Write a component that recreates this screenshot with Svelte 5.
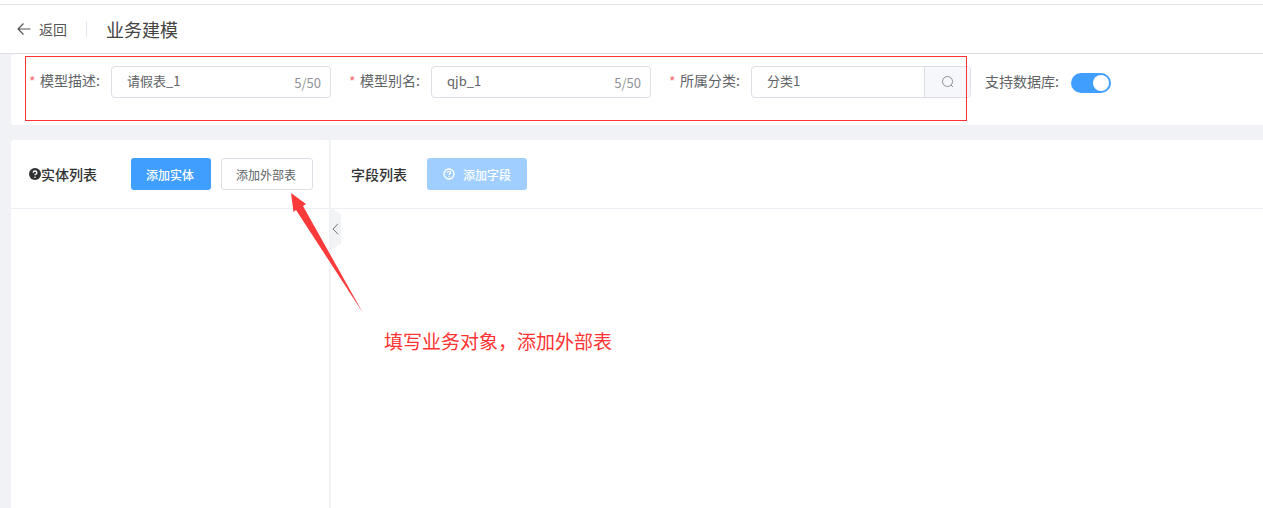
<script>
  const fields = [
    { label: '模型描述:', value: '请假表_1', count: '5/50' },
    { label: '模型别名:', value: 'qjb_1', count: '5/50' }
  ];
</script>

<div class="page">
  <header class="topbar">
    <button class="back">
      <svg width="14" height="14" viewBox="0 0 14 14" fill="none" stroke="#555" stroke-width="1.2"><path d="M13.500 7H1M6.500 1.500 1 7l5.500 5.500" /></svg>
      <span>返回</span>
    </button>
    <i class="sep"></i>
    <h1>业务建模</h1>
  </header>

  <section class="form">
    {#each fields as f}
      <div class="field">
        <span class="star">*</span>
        <span class="label">{f.label}</span>
        <div class="input">
          <span class="val">{f.value}</span>
          <span class="count">{f.count}</span>
        </div>
      </div>
    {/each}
    <div class="field">
      <span class="star">*</span>
      <span class="label">所属分类:</span>
      <div class="input group">
        <span class="val">分类1</span>
        <span class="append">
          <svg width="14" height="14" viewBox="0 0 14 14" fill="none" stroke="#8a8f99" stroke-width="1"><circle cx="6.500" cy="6.500" r="5" /><path d="m10 10 2 2" /></svg>
        </span>
      </div>
    </div>
    <div class="switch-field">
      <span class="label">支持数据库:</span>
      <span class="switch"><i></i></span>
    </div>
  </section>

  <main class="panels">
    <aside class="left">
      <div class="panel-head left-head">
        <div class="title">
          <svg width="12" height="12" viewBox="0 0 12 12"><circle cx="6" cy="6" r="6" fill="#303133" /><path d="M4.200 4.700c0-2.300 3.700-2.300 3.700 0 0 1.400-1.900 1.400-1.900 2.600" fill="none" stroke="#fff" stroke-width="1.300" /><circle cx="6" cy="9.200" r=".8" fill="#fff" /></svg>
          <span>实体列表</span>
        </div>
        <button class="btn primary">添加实体</button>
        <button class="btn plain">添加外部表</button>
      </div>
      <div class="collapse">
        <svg width="7" height="12" viewBox="0 0 7 12" fill="none" stroke="#777" stroke-width="1"><path d="M6 .8 1 6l5 5.200" /></svg>
      </div>
    </aside>
    <section class="right">
      <div class="panel-head right-head">
        <span class="title">字段列表</span>
        <button class="btn disabled">
          <svg width="12" height="12" viewBox="0 0 12 12" fill="none" stroke="#fff" stroke-width="1.300"><circle cx="6" cy="6" r="5" /><path d="M4.500 4.800c0-2 3-2 3 0 0 1.100-1.500 1.100-1.500 2.200M6 8v1" /></svg>
          <span>添加字段</span>
        </button>
      </div>
    </section>
  </main>

  <div class="note-box"></div>
  <svg class="arrow" width="90" height="130" viewBox="0 0 90 130">
    <path d="M2 3 17 14 14 16 74 123 7 20 4.500 22Z" fill="#fb3b3b" />
  </svg>
  <div class="note">填写业务对象，添加外部表</div>
</div>

<style>
  :global(body) {
    margin: 0;
    background: #f0f2f5;
  }
  * {
    box-sizing: border-box;
  }
  .page {
    position: relative;
    width: 1263px;
    height: 508px;
    overflow: hidden;
    padding-top: 4px;
    background: #f0f2f5;
    color: #606266;
    font-family: "Noto Sans CJK SC", "Liberation Sans", sans-serif;
    font-size: 14px;
  }
  .page::before {
    content: "";
    position: absolute;
    inset: 0 0 auto;
    height: 4px;
    background: #fff;
  }
  .topbar {
    display: flex;
    align-items: center;
    height: 50px;
    padding-left: 17px;
    padding-bottom: 1px;
    background: #fff;
    border-top: 1px solid #e2e3e6;
    border-bottom: 1px solid #dcdee3;
  }
  .back {
    display: flex;
    align-items: center;
    gap: 8px;
    padding: 0;
    border: 0;
    background: none;
    color: #555;
    font: inherit;
    line-height: 18px;
  }
  .sep {
    width: 1px;
    height: 16px;
    margin: 0 19px 0 19px;
    background: #e4e7ed;
  }
  h1 {
    margin: 0;
    color: #444;
    font-size: 18px;
    font-weight: 400;
    line-height: 24px;
  }
  .form {
    display: flex;
    height: 71px;
    margin-left: 11px;
    padding: 12px 0 0 18px;
    background: #fff;
    border-radius: 3px 0 0 3px;
  }
  .field {
    display: flex;
    align-items: flex-start;
    margin-right: 18px;
  }
  .star {
    width: 11px;
    color: #f56c6c;
    line-height: 30px;
  }
  .label {
    width: 71px;
    line-height: 29px;
    white-space: nowrap;
  }
  .input {
    display: flex;
    justify-content: space-between;
    width: 220px;
    height: 32px;
    padding: 0 9px 0 15px;
    border: 1px solid #dcdfe6;
    border-radius: 4px;
    background: #fff;
    line-height: 28px;
  }
  .val {
    font-size: 13px;
    color: #5f6266;
  }
  .count {
    margin-top: 2px;
    color: #909399;
    font-size: 13px;
  }
  .group {
    padding-right: 0;
    overflow: hidden;
  }
  .append {
    display: flex;
    align-items: center;
    justify-content: center;
    width: 46px;
    height: 30px;
    background: #f5f7fa;
    border-left: 1px solid #dcdfe6;
  }
  .switch-field {
    display: flex;
    align-items: flex-start;
    margin-left: -4px;
  }
  .switch-field .label {
    width: 86px;
    line-height: 30px;
  }
  .switch {
    position: relative;
    width: 40px;
    height: 20px;
    margin-top: 7px;
    border-radius: 10px;
    background: #409eff;
  }
  .switch i {
    position: absolute;
    top: 2px;
    right: 2px;
    width: 16px;
    height: 16px;
    border-radius: 50%;
    background: #fff;
  }
  .panels {
    display: flex;
    gap: 2px;
    height: 368px;
    margin: 15px 0 0 11px;
  }
  .left {
    position: relative;
    width: 318px;
    background: #fff;
    border-radius: 3px 3px 0 0;
  }
  .right {
    flex: 1;
    background: #fff;
  }
  .panel-head {
    display: flex;
    align-items: center;
    height: 69px;
    border-bottom: 1px solid #ebeef5;
  }
  .left-head {
    padding-left: 18px;
  }
  .right-head {
    padding-left: 20px;
  }
  .title {
    display: flex;
    align-items: center;
    color: #303133;
    font-size: 14px;
    font-weight: 500;
    line-height: 20px;
  }
  .left-head .title {
    width: 102px;
  }
  .right-head .title {
    width: 76px;
  }
  .btn {
    display: flex;
    align-items: center;
    justify-content: center;
    height: 32px;
    padding: 0;
    border: 1px solid transparent;
    border-radius: 3px;
    font: inherit;
    font-size: 12px;
    white-space: nowrap;
  }
  .primary {
    width: 80px;
    margin-right: 10px;
    padding-right: 2px;
    background: #409eff;
    color: #fff;
    font-weight: 500;
  }
  .plain {
    width: 92px;
    padding-right: 2px;
    background: #fff;
    border-color: #dcdfe6;
    color: #606266;
  }
  .disabled {
    gap: 8px;
    width: 100px;
    background: #a0cfff;
    color: #fff;
    font-weight: 500;
  }
  .collapse {
    position: absolute;
    top: 68px;
    right: -12px;
    display: flex;
    align-items: center;
    justify-content: flex-start;
    width: 10px;
    height: 42px;
    padding-left: 1px;
    background: #f2f3f5;
    clip-path: polygon(0 0, 100% 14%, 100% 86%, 0 100%);
  }
  .note-box {
    position: absolute;
    left: 25px;
    top: 56px;
    width: 942px;
    height: 65px;
    border: 1px solid #f33;
  }
  .arrow {
    position: absolute;
    left: 289px;
    top: 190px;
  }
  .note {
    position: absolute;
    left: 384px;
    top: 327px;
    color: #f33;
    font-size: 19px;
    line-height: 28px;
    white-space: nowrap;
  }
</style>
